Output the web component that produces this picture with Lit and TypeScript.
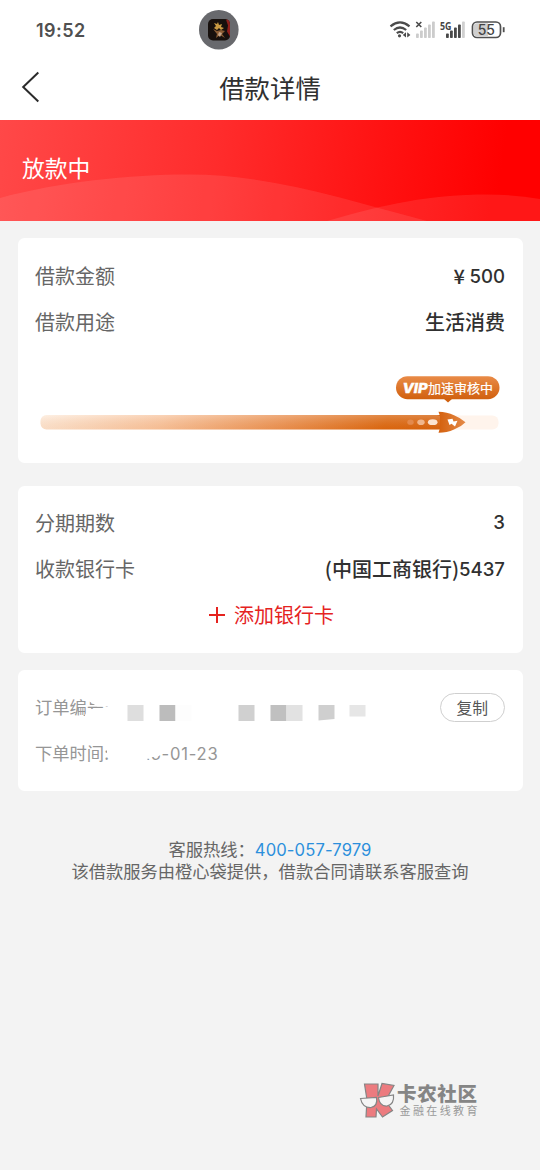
import { LitElement, html, css, svg } from "lit";
import { customElement } from "lit/decorators.js";

const bars = (x: number, on: string, off: string, lit: number) =>
  [0, 1, 2, 3, 4].map(
    (i) => svg`<rect x=${x + i * 4} y=${33.5 - i * 3} width="2.8" height=${4.5 + i * 3} rx=".8" fill=${i < lit ? on : off} />`
  );

@customElement("app-status-bar")
class AppStatusBar extends LitElement {
  static styles = css`
    :host { display: block; height: 60px; background: #fff; }
    svg { display: block; }
    .time { font: 600 18px Inter, "Noto Sans", sans-serif; letter-spacing: 0.8px; }
    .tiny { font: 700 11px "Noto Sans", sans-serif; }
    .batt { font: 500 14px Inter, "Noto Sans", sans-serif; }
  `;
  render() {
    return html`<svg width="540" height="60" viewBox="0 0 540 60">
      <text class="time" x="36" y="36.5" fill="#505050" textLength="50">19:52</text>
      <circle cx="218.8" cy="29.7" r="19.8" fill="#68696d" />
      <rect x="208" y="19" width="22" height="21.5" rx="5" fill="#17100d" />
      <path d="M226 19.5q4 0 4 5v12l-3-5 1-6z" fill="#8f1f1c" />
      <path d="M214 23l3 1 1-2 1 3 3-1-1 3 3 1-3 2-2-2-2 2-3-2 2-2z" fill="#c99a43" />
      <path d="M213 29l4 2 4-1 4 1-3 3 3 4-5-3-4 3 1-4z" fill="#8a5c34" />
      <path d="M219 32l3 1-2 4-2-2z" fill="#c5a58a" />
      <g fill="none" stroke="#4b4b4b" stroke-width="2.2">
        <path d="M390.500 26.300Q400 18.600 409.500 26.300" />
        <path d="M393.800 30Q400 25 406.200 30" />
        <path d="M396.800 33.200Q400 30.700 403.200 33.200" />
      </g>
      <circle cx="399.500" cy="35.800" r="1.600" fill="#4b4b4b" />
      <path d="M406 32.200v5.400l-3.200-2.700zM407.200 32.200v5.400l3.200-2.700z" fill="#4b4b4b" />
      <path d="M416.300 22l5 5m0-5l-5 5" stroke="#4b4b4b" stroke-width="1.600" />
      ${bars(416, "#ccc", "#d0d0d0", 5)}
      ${bars(446, "#484848", "#d0d0d0", 4)}
      <text class="tiny" x="440" y="30" fill="#444" textLength="11.500" lengthAdjust="spacingAndGlyphs">5G</text>
      <rect x="472.500" y="22" width="28" height="15.500" rx="4.500" fill="#fff" stroke="#505050" stroke-width="1.700" />
      <path d="M477 23.300h11v12.900h-11q-3.200 0-3.200-3.200v-6.500q0-3.200 3.200-3.200z" fill="#cfcfcf" />
      <path d="M503.700 27.200v5" stroke="#505050" stroke-width="1.800" />
      <text class="batt" x="486.300" y="35" text-anchor="middle" fill="#444">55</text>
    </svg>`;
  }
}

@customElement("app-progress")
class AppProgress extends LitElement {
  static styles = css`
    :host { display: block; }
    svg { display: block; width: 470px; height: 70px; }
    .vip { font: italic 800 13.5px Inter, "Noto Sans", sans-serif; }
    .label { font: 400 13px "Noto Sans CJK SC", sans-serif; }
  `;
  render() {
    return html`<svg viewBox="35 370 470 70">
      <defs>
        <linearGradient id="fill" x1="0" x2="1" y1="0" y2=".015">
          <stop offset="0" stop-color="#fdecdd" />
          <stop offset=".3" stop-color="#f8c7a3" />
          <stop offset=".6" stop-color="#e99254" />
          <stop offset=".85" stop-color="#d9660f" />
          <stop offset="1" stop-color="#d4600d" />
        </linearGradient>
        <linearGradient id="shade" x1="0" x2="0" y1="0" y2="1">
          <stop offset="0" stop-color="#fff" stop-opacity=".22" />
          <stop offset="1" stop-color="#d9650f" stop-opacity=".1" />
        </linearGradient>
        <linearGradient id="pill" x1="0" x2="0" y1="0" y2="1">
          <stop offset="0" stop-color="#e98b47" />
          <stop offset="1" stop-color="#d1600f" />
        </linearGradient>
        <linearGradient id="rocket" x1="0" x2="1" y1="0" y2="0">
          <stop offset="0" stop-color="#d4600d" />
          <stop offset="1" stop-color="#e48a48" />
        </linearGradient>
      </defs>
      <rect x="400" y="415.500" width="98.500" height="14" rx="6" fill="#fff4ec" />
      <rect x="40.500" y="415" width="410" height="14.500" rx="6" fill="url(#fill)" />
      <rect x="40.500" y="415" width="402" height="14.500" rx="6" fill="url(#shade)" />
      <path d="M438.500 411.700Q447 411.700 454 415.200Q461 418 465.500 422.200Q461 427 454 429.400Q447 432.700 438.500 432.700L440 428V416z" fill="url(#rocket)" />
      <ellipse cx="410.500" cy="422.200" rx="3.200" ry="2.600" fill="#e3894c" />
      <ellipse cx="421" cy="422.200" rx="3.700" ry="2.800" fill="#f0b68d" />
      <ellipse cx="432.700" cy="422.200" rx="4.800" ry="2.900" fill="#fbe4d3" />
      <path d="M447.500 419.500L452.500 418.800 453.500 421.500 457.500 420.800 455 426.500 451.500 423.800 449.500 425z" fill="#fff" />
      <path d="M443.500 398.500h9l-4.500 4z" fill="#d0600f" />
      <rect x="396" y="376.200" width="103.500" height="23" rx="11.500" fill="url(#pill)" />
      <text class="vip" x="402.500" y="393" fill="#fff" stroke="#fff" stroke-width=".4" textLength="25" lengthAdjust="spacingAndGlyphs">VIP</text>
      <text class="label" x="428" y="392.800" fill="#fff" stroke="#fff" stroke-width=".2" textLength="65">加速审核中</text>
    </svg>`;
  }
}

@customElement("app-root")
class AppRoot extends LitElement {
  static styles = css`
    :host {
      display: flex; flex-direction: column; width: 540px; height: 1170px; overflow: hidden;
      position: relative; background: #f3f3f3; color: #303030;
      font-family: "Noto Sans CJK SC", sans-serif;
    }
    * { box-sizing: border-box; }
    .nav { height: 60px; background: #fff; display: grid; grid-template-columns: 60px 1fr 60px; align-items: center; padding-bottom: 7px; }
    .nav svg { display: block; margin-left: 20px; }
    .title { text-align: center; font-size: 25.4px; line-height: 34px; color: #303030; }
    .banner { height: 101px; display: grid; background: linear-gradient(97deg, #ff4848 0%, #ff2c2c 40%, #ff1212 70%, #ff0000 92%); }
    .banner > * { grid-area: 1 / 1; }
    .state { padding: 31px 0 0 22px; font-size: 22.8px; line-height: 34px; color: #fff; }
    .cards { padding: 17px 17.5px 0; }
    .card { background: #fff; border-radius: 6.5px; padding: 14px 17.5px 0; }
    .loan { height: 225px; margin-bottom: 22.5px; }
    .bank { height: 167.5px; margin-bottom: 17px; }
    .order { height: 121px; color: #969696; font-size: 17.3px; position: relative; }
    .row { display: flex; justify-content: space-between; align-items: center; height: 46px; font-size: 20px; }
    .key { color: #666; }
    .val { font-weight: 500; }
    .num { font-family: Inter, "Noto Sans CJK SC", sans-serif; font-size: 18.6px; display: inline-block; transform: translateY(-1px); }
    .loan app-progress { margin-top: 26px; }
    .add { display: flex; justify-content: center; align-items: center; gap: 9px; height: 45px; font-size: 20px; color: #e5231f; padding-left: 3px; }
    .add svg { margin-top: 2px; }
    .line { display: flex; align-items: center; justify-content: space-between; height: 45px; white-space: pre; }
    .line + .line { height: 47px; }
    .date { font-family: Inter, sans-serif; font-size: 16.6px; letter-spacing: .75px; margin-left: 5px; }
    .copy { width: 65.5px; height: 29px; margin-top: 1px; border: 1px solid #cfcfcf; border-radius: 15px; font: 15.8px/25px "Noto Sans CJK SC", sans-serif; text-align: center; color: #555; background: #fff; padding: 0; }
    .mask { position: absolute; left: 0; top: 0; display: block; }
    .help { margin-top: 47.5px; text-align: center; font-family: "Liberation Sans", "Noto Sans CJK SC", sans-serif; font-size: 17.27px; line-height: 22px; color: #666; }
    .help div { height: 22px; }
    .tel { color: #2b8fdc; font-family: Inter, sans-serif; font-size: 16.6px; letter-spacing: .12px; }
    .mark { position: absolute; left: 358px; top: 1078px; }
    .brand { font: 900 19.5px "Liberation Sans", "Noto Sans CJK SC", sans-serif; }
    .sub { font: 400 11px "Liberation Sans", "Noto Sans CJK SC", sans-serif; }
  `;
  render() {
    return html`
      <app-status-bar></app-status-bar>
      <div class="nav">
        <svg width="22" height="34" viewBox="0 0 22 34"><path d="M18.300 2.500L3.200 17l15.100 14.500" fill="none" stroke="#2b2b2b" stroke-width="2" /></svg>
        <div class="title">借款详情</div>
      </div>
      <div class="banner">
        <svg width="540" height="101">
          <path d="M0 78C58 62 130 54.500 188 54.500C270 54.500 340 78 427 101H0z" fill="#fff" opacity=".09" />
          <path d="M327 101C385 84 430 74.500 487 74.500Q515 74.500 540 79V101z" fill="#fff" opacity=".09" />
        </svg>
        <div class="state">放款中</div>
      </div>
      <div class="cards">
        <div class="card loan">
          <div class="row"><span class="key">借款金额</span><span class="val">¥ <span class="num">500</span></span></div>
          <div class="row"><span class="key">借款用途</span><span class="val">生活消费</span></div>
          <app-progress></app-progress>
        </div>
        <div class="card bank">
          <div class="row"><span class="key">分期期数</span><span class="val num">3</span></div>
          <div class="row"><span class="key">收款银行卡</span><span class="val">(中国工商银行)<span class="num">5437</span></span></div>
          <div class="add">
            <svg width="16" height="16"><path d="M0 8h16M8 0v16" stroke="#e5231f" stroke-width="2" /></svg>
            <span>添加银行卡</span>
          </div>
        </div>
        <div class="card order">
          <div class="line"><span>订单编号:</span><button class="copy">复制</button></div>
          <div class="line"><span>下单时间: <span class="date">2025-01-23</span></span></div>
          <svg class="mask" width="400" height="110" viewBox="17.500 670 400 110">
            <path d="M88 709H115V720H84.500V715L87 711zM88 690H115V706.500H97L88 701z" fill="#fff" />
            <path d="M106.500 740H162V751L160.500 754.500Q158 757 153 757H147V765H110V756H106.500z" fill="#fff" />
            <g>
              <rect x="127" y="705" width="16" height="16" fill="#dedede" />
              <rect x="159" y="705" width="16" height="16" fill="#bcbcbc" />
              <rect x="175" y="705" width="16" height="16" fill="#fdfdfd" />
              <rect x="238" y="705" width="16" height="16" fill="#d0d0d0" />
              <rect x="270" y="705" width="16" height="16" fill="#c0c0c0" />
              <rect x="286" y="705" width="16" height="16" fill="#e2e2e2" />
              <path d="M318 705h16v14l-16 1.500z" fill="#cfcfcf" />
              <rect x="349" y="705" width="16" height="11.500" fill="#e6e6e6" />
            </g>
          </svg>
        </div>
      </div>
      <div class="help">
        <div>客服热线：<span class="tel">400-057-7979</span></div>
        <div>该借款服务由橙心袋提供，借款合同请联系客服查询</div>
      </div>
      <svg class="mark" width="124" height="44" viewBox="358 1078 124 44">
        <g stroke="#858585" stroke-width="1.200">
          <path d="M364.500 1084H378V1096L382 1083.500 394 1085.500 385.500 1101 392.500 1110.500 382.500 1117 376.500 1109 376 1117H366L367 1100z" fill="#ec7b7f" />
          <path d="M360.500 1098.500L376.500 1097.500Q378 1106 371 1107.500Q362.500 1108 360.500 1098.500zM378.500 1097.500L393.500 1095Q394.500 1104.500 387 1106Q379.500 1106.500 378.500 1097.500z" fill="#f5f5f5" />
        </g>
        <text class="brand" x="397" y="1100.500" fill="#858585" textLength="80">卡农社区</text>
        <text class="sub" x="399.500" y="1115" fill="#999" textLength="78">金融在线教育</text>
      </svg>
    `;
  }
}
